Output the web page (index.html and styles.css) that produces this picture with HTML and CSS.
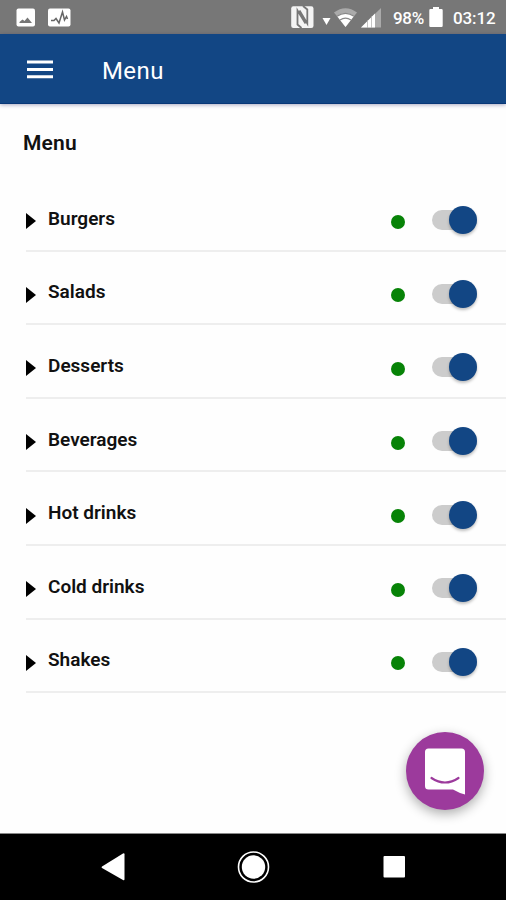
FILE: index.html
```html
<!DOCTYPE html>
<html lang="en">
<head>
<meta charset="utf-8">
<title>Menu</title>
<link rel="stylesheet" href="styles.css">
</head>
<body>
<div class="screen">
  <div class="status">
    <svg class="status-icons" width="60" height="34" viewBox="0 0 60 34">
      <rect x="1.5" y="8.5" width="18.5" height="18" rx="2" fill="#fff"/>
      <path d="M4.5 23v-1l3-2.500 2 1.500 3-3.500 4.500 5.500z" fill="#777"/>
      <rect x="33" y="8.500" width="22.500" height="18" rx="2" fill="#fff"/>
      <path d="M36 20.500h3l2-2 3 4.500 3.500-11 2 8 2-3.500 1 2.500" fill="none" stroke="#666" stroke-width="1.500"/>
    </svg>
    <div class="status-right">
      <svg width="94" height="34" viewBox="290 0 94 34">
        <rect x="292.200" y="6.200" width="22.300" height="21.800" rx="2.200" fill="#f4f4f4"/>
        <path d="M302.500 28L298.500 24.500V10.500L306.500 23.500M304 6L308.300 9.500V23.500L300.500 10.500" fill="none" stroke="#777" stroke-width="1.800"/>
        <path d="M323.500 18h8l-4 7z" fill="#fff"/>
        <path d="M335 12.500q11.500-8.500 23 0L346.500 27z" fill="#aaa"/>
        <path d="M338 16q8.500-6 17 0L346.500 27z" fill="#fff"/>
        <path d="M338 16.300q8.500-6 17 0M341 20q5.500-3.800 11 0" fill="none" stroke="#888" stroke-width="1.200"/>
        <path d="M362 27.500L382 8v19.500z" fill="#aaa"/>
        <path d="M362 27.500L376 13.500v14z" fill="#fff"/>
        <path d="M368.500 20v8M372.500 16v12" stroke="#aaa" stroke-width=".7"/>
      </svg>
      <span class="battery-text">98%</span>
      <svg class="battery" width="14" height="22" viewBox="0 0 14 22"><path d="M4 1h6v2h2.500q1.200 0 1.200 1.200v15.600q0 1.200-1.200 1.200h-11Q.3 21 .3 19.800V4.200Q.3 3 1.500 3H4z" fill="#fff"/></svg>
      <span class="clock">03:12</span>
    </div>
  </div>
  <header class="appbar">
    <svg width="26" height="20" viewBox="0 0 26 20"><path d="M0 3h26M0 10.500h26M0 17.700h26" stroke="#fff" stroke-width="3"/></svg>
    <span class="appbar-title">Menu</span>
  </header>
  <main class="content">
    <h1 class="heading">Menu</h1>
    <ul class="list">
      <li class="row"><i class="arrow"></i><span class="label">Burgers</span><i class="dot"></i><span class="toggle"><i class="knob"></i></span></li>
      <li class="row"><i class="arrow"></i><span class="label">Salads</span><i class="dot"></i><span class="toggle"><i class="knob"></i></span></li>
      <li class="row"><i class="arrow"></i><span class="label">Desserts</span><i class="dot"></i><span class="toggle"><i class="knob"></i></span></li>
      <li class="row"><i class="arrow"></i><span class="label">Beverages</span><i class="dot"></i><span class="toggle"><i class="knob"></i></span></li>
      <li class="row"><i class="arrow"></i><span class="label">Hot drinks</span><i class="dot"></i><span class="toggle"><i class="knob"></i></span></li>
      <li class="row"><i class="arrow"></i><span class="label">Cold drinks</span><i class="dot"></i><span class="toggle"><i class="knob"></i></span></li>
      <li class="row"><i class="arrow"></i><span class="label">Shakes</span><i class="dot"></i><span class="toggle"><i class="knob"></i></span></li>
    </ul>
    <button class="chat" aria-label="Chat">
      <svg width="78" height="78" viewBox="0 0 78 78">
        <path d="M22.500 16.500h33q3.500 0 3.500 3.500v42.500q-6-1.500-12-5H22.500q-3.500 0-3.500-3.500V20q0-3.500 3.500-3.500z" fill="#fff"/>
        <path d="M25.500 46q13.500 9 27 0" fill="none" stroke="#9c3a9c" stroke-width="2.200" stroke-linecap="round"/>
      </svg>
    </button>
  </main>
  <nav class="navbar">
    <svg width="506" height="66" viewBox="0 834 506 66">
      <path d="M102 866.500L123 853.500q1.500-.8 1.500.8v25q0 1.600-1.500.8L102 868q-1-.8 0-1.500z" fill="#fff"/>
      <circle cx="253.500" cy="867" r="15" fill="none" stroke="#fff" stroke-width="1.600"/>
      <circle cx="253.500" cy="867" r="11.700" fill="#fff"/>
      <rect x="383.500" y="856" width="21.500" height="21.500" rx="1" fill="#fff"/>
    </svg>
  </nav>
</div>
</body>
</html>
```
FILE: styles.css
```css
* { box-sizing: border-box; }
body { margin: 0; font-family: Roboto, "Liberation Sans", sans-serif; }
svg { display: block; }
.screen { width: 506px; height: 900px; display: flex; flex-direction: column; overflow: hidden; background: #fefefe; }
.status { height: 34px; flex: none; display: flex; justify-content: space-between; padding: 0 10px 0 15px; background: #777; color: #fff; }
.status-right { display: flex; align-items: center; font-size: 17px; font-weight: 500; }
.battery-text { width: 31px; margin-left: 10px; margin-right: 5px; letter-spacing: -.3px; padding-top: 2px; }
.battery { margin-right: 10px; }
.clock { width: 43px; padding-top: 2px; letter-spacing: -.1px; }
.appbar { height: 70px; flex: none; display: flex; align-items: center; padding: 0 27px; background: #124684; border-bottom: 1px solid #073777; box-shadow: 0 1px 4px rgba(40, 40, 100, .4); color: #fff; z-index: 1; }
.appbar-title { margin: 4px 0 0 49px; font-size: 24px; letter-spacing: .4px; }
.content { flex: 1; position: relative; }
.heading { margin: 0; padding: 26px 23px 0; height: 74px; font-size: 21px; line-height: 26px; font-weight: 600; letter-spacing: .2px; color: #111; }
.list { list-style: none; margin: 0; padding: 0 0 0 26px; }
.row { height: 73.6px; display: flex; align-items: center; padding: 13px 29.5px 0 0; border-bottom: 2px solid #eee; }
.arrow { width: 0; height: 0; margin-top: 2px; border: 8.5px solid transparent; border-left: 10px solid #000; border-right: 0; }
.label { flex: 1; margin: -4px 0 0 12px; font-size: 19px; font-weight: 600; color: #111; }
.dot { width: 14px; height: 14px; margin: 3px 27px 0 0; border-radius: 50%; background: #078307; }
.toggle { width: 45px; height: 20px; display: flex; align-items: center; justify-content: flex-end; border-radius: 10px; background: #ccc; }
.knob { width: 28px; height: 28px; flex: none; border-radius: 50%; background: #124684; box-shadow: 0 2px 3px rgba(0, 0, 0, .25); }
.chat { position: absolute; right: 22px; bottom: 23px; width: 78px; height: 78px; padding: 0; border: 0; border-radius: 50%; background: #9c3a9c; box-shadow: 0 4px 12px rgba(0, 0, 0, .32); }
.navbar { height: 67px; flex: none; border-top: 1px solid #888; background: #000; }
```
